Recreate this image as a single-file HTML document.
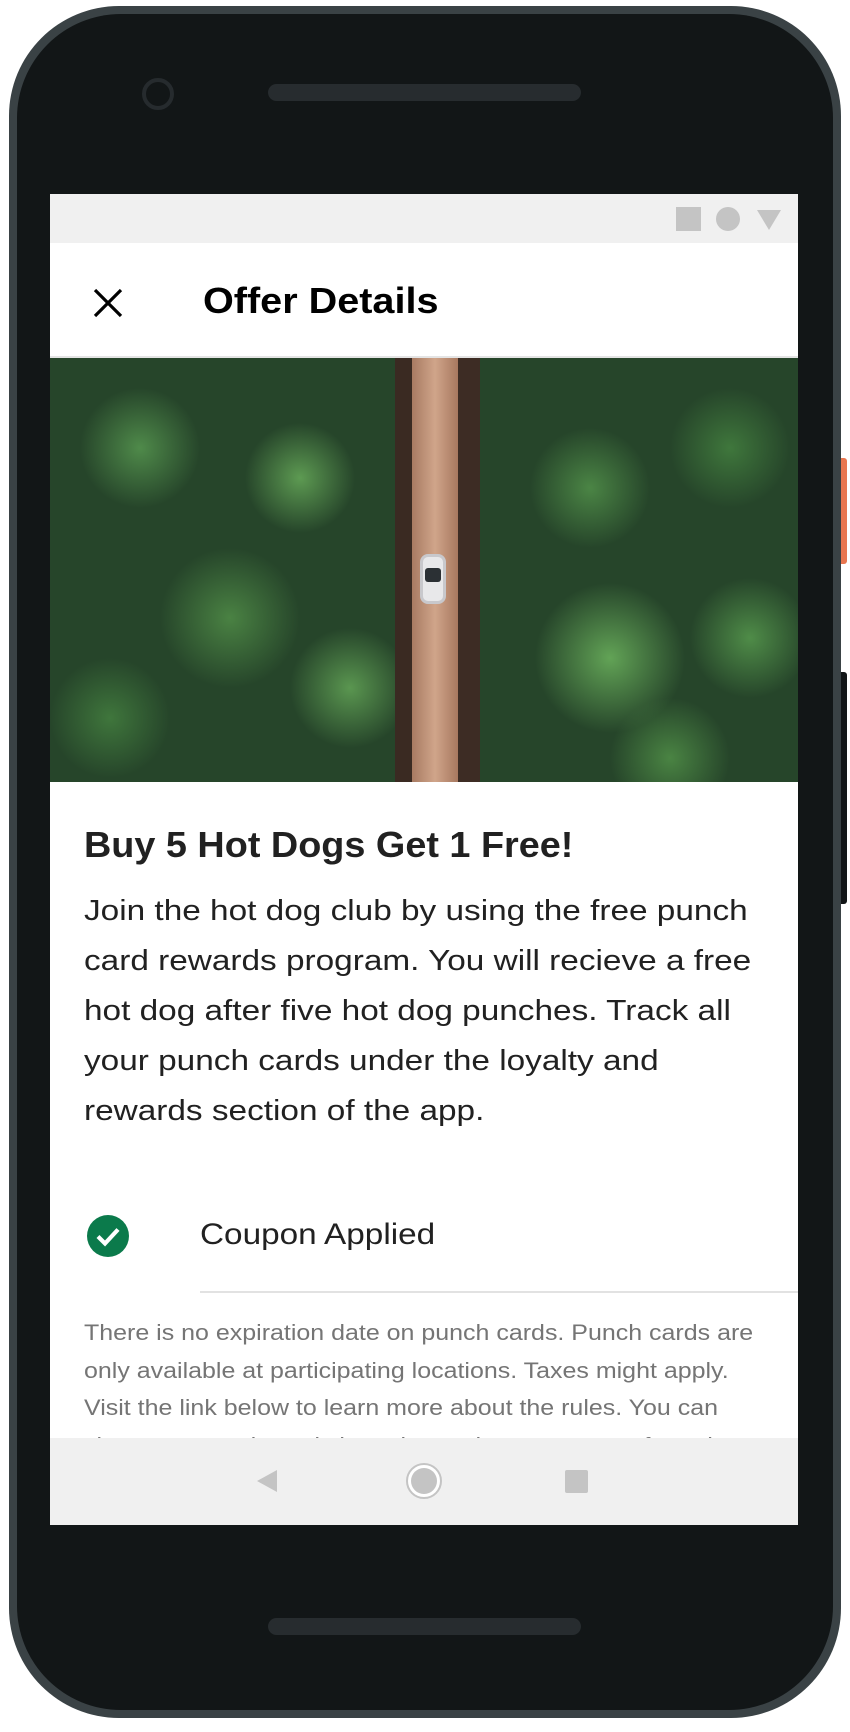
<!DOCTYPE html>
<html><head><meta charset="utf-8">
<style>
*{margin:0;padding:0;box-sizing:border-box}
html,body{width:850px;height:1732px;background:#fff;overflow:hidden;font-family:"Liberation Sans",sans-serif}
.abs{position:absolute}
.phone{left:9px;top:6px;width:832px;height:1712px;border-radius:110px;background:#3a4245}
.screen{left:50px;top:194px;width:748px;height:1331px;background:#fff;overflow:hidden}
.line{white-space:nowrap}
.sx{transform-origin:0 0}
</style></head><body>
<div class="abs phone"></div>
<div class="abs" style="left:17px;top:14px;width:816px;height:1696px;border-radius:104px;background:#121617"></div>
<div class="abs" style="left:841px;top:458px;width:6px;height:106px;background:#e8764f;border-radius:0 3px 3px 0"></div>
<div class="abs" style="left:841px;top:672px;width:6px;height:232px;background:#121617;border-radius:0 3px 3px 0"></div>
<div class="abs" style="left:142px;top:78px;width:32px;height:32px;border-radius:50%;border:4px solid #262b2e;background:#121617"></div>
<div class="abs" style="left:268px;top:84px;width:313px;height:17px;border-radius:9px;background:#272c2f"></div>
<div class="abs" style="left:268px;top:1618px;width:313px;height:17px;border-radius:9px;background:#272c2f"></div>

<div class="abs screen">
  <div class="abs" style="left:0;top:0;width:748px;height:49px;background:#f0f0f0"></div>
  <div class="abs" style="left:626px;top:13px;width:25px;height:24px;background:#c4c4c4"></div>
  <div class="abs" style="left:666px;top:13px;width:24px;height:24px;border-radius:50%;background:#c4c4c4"></div>
  <div class="abs" style="left:707px;top:16px;width:0;height:0;border-left:12px solid transparent;border-right:12px solid transparent;border-top:20px solid #c4c4c4"></div>

  <div class="abs" style="left:0;top:49px;width:748px;height:115px;background:#fff;border-bottom:2px solid #e4e4e4"></div>
  <svg class="abs" style="left:42px;top:93px" width="32" height="32" viewBox="0 0 32 32"><path d="M3 3L29 29M29 3L3 29" stroke="#000" stroke-width="3.2"/></svg>
  <div class="abs line sx" style="left:153px;top:86px;font-size:36px;font-weight:bold;color:#000;transform:scaleX(1.1)">Offer Details</div>

  <div class="abs" style="left:0;top:164px;width:748px;height:424px;background:
    radial-gradient(circle at 90px 90px,#4f8a4a 0,transparent 60px),
    radial-gradient(circle at 250px 120px,#5d9a52 0,transparent 55px),
    radial-gradient(circle at 180px 260px,#4a8243 0,transparent 70px),
    radial-gradient(circle at 300px 330px,#5a9650 0,transparent 60px),
    radial-gradient(circle at 60px 360px,#3f763c 0,transparent 60px),
    radial-gradient(circle at 540px 130px,#4b8545 0,transparent 60px),
    radial-gradient(circle at 680px 90px,#3f773c 0,transparent 60px),
    radial-gradient(circle at 560px 300px,#62a356 0,transparent 75px),
    radial-gradient(circle at 700px 280px,#4f8c48 0,transparent 60px),
    radial-gradient(circle at 620px 400px,#4a8443 0,transparent 60px),
    #26452a">
    <div class="abs" style="left:345px;top:0;width:35px;height:424px;background:#3a2a22"></div>
    <div class="abs" style="left:400px;top:0;width:30px;height:424px;background:#3d2c24"></div>
    <div class="abs" style="left:362px;top:0;width:46px;height:424px;background:linear-gradient(90deg,#a77a62,#d0a58a 50%,#a7785f)"></div>
    <div class="abs" style="left:370px;top:196px;width:26px;height:50px;border-radius:8px;background:#e8e8ea;border:3px solid #c8c8cc"></div>
    <div class="abs" style="left:375px;top:210px;width:16px;height:14px;background:#2b3034;border-radius:3px"></div>
  </div>

  <div class="abs line sx" style="left:34px;top:630px;font-size:36px;font-weight:bold;color:#212121;transform:scaleX(1.05)">Buy 5 Hot Dogs Get 1 Free!</div>
  <div class="abs sx" style="left:34px;top:692px;font-size:28.5px;line-height:50px;color:#212121;transform:scaleX(1.17)">
    <div class="line">Join the hot dog club by using the free punch</div>
    <div class="line">card rewards program. You will recieve a free</div>
    <div class="line">hot dog after five hot dog punches. Track all</div>
    <div class="line">your punch cards under the loyalty and</div>
    <div class="line">rewards section of the app.</div>
  </div>

  <svg class="abs" style="left:37px;top:1021px" width="42" height="42" viewBox="0 0 42 42"><circle cx="21" cy="21" r="21" fill="#0b7a4b"/><path d="M11 21.5l7 7 13-14" stroke="#fff" stroke-width="4.2" fill="none"/></svg>
  <div class="abs line sx" style="left:150px;top:1024px;font-size:30px;color:#212121;transform:scaleX(1.11)">Coupon Applied</div>
  <div class="abs" style="left:150px;top:1097px;width:598px;height:2px;background:#e2e2e2"></div>

  <div class="abs sx" style="left:34px;top:1120px;font-size:22.5px;line-height:37.5px;color:#757575;transform:scaleX(1.11)">
    <div class="line">There is no expiration date on punch cards. Punch cards are</div>
    <div class="line">only available at participating locations. Taxes might apply.</div>
    <div class="line">Visit the link below to learn more about the rules. You can</div>
    <div class="line">view your punch cards by going to the more menu from the</div>
  </div>

  <div class="abs" style="left:0;top:1244px;width:748px;height:87px;background:#f0f0f0"></div>
  <div class="abs" style="left:207px;top:1276px;width:0;height:0;border-top:11px solid transparent;border-bottom:11px solid transparent;border-right:20px solid #c4c4c4"></div>
  <div class="abs" style="left:356px;top:1269px;width:36px;height:36px;border-radius:50%;border:2px solid #c4c4c4;background:#fff"></div>
  <div class="abs" style="left:361px;top:1274px;width:26px;height:26px;border-radius:50%;background:#c4c4c4"></div>
  <div class="abs" style="left:515px;top:1276px;width:23px;height:23px;background:#c4c4c4;border-radius:2px"></div>
</div>
</body></html>
